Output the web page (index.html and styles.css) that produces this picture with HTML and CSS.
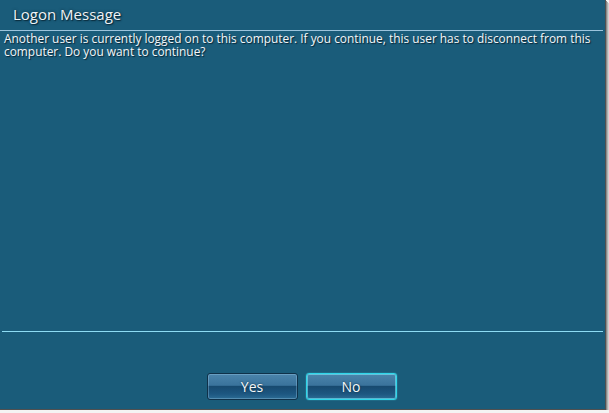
FILE: index.html
```html
<!DOCTYPE html>
<html lang="en">
<head>
  <meta charset="UTF-8">
  <title>Logon Message</title>
  <link rel="stylesheet" href="styles.css">
</head>
<body>
<div class="dialog">
  <div class="title">Logon Message</div>
  <div class="message">
    Another user is currently logged on to this computer. If you continue, this user has to disconnect from this
    computer. Do you want to continue?
  </div>
  <div class="bottom">
    <div class="buttons">
      <button class="btn">Yes</button>
      <button class="btn focus">No</button>
    </div>
  </div>
</div>
</body>
</html>
```

FILE: styles.css
```css
* {
  margin: 0;
  padding: 0;
  box-sizing: border-box;
}

body {
  background: #f4f4f4;
  font-family: "Open Sans", "Noto Sans", "Liberation Sans", sans-serif;
}

.dialog {
  width: 606px;
  height: 410px;
  background: #1a5c7a;
  border-right: 1px solid #505050;
  border-bottom: 1px solid #505050;
  box-shadow: 1px 1px 0 #8a8a8a, 2px 2px 0 #b0b0b0, 3px 3px 0 #d0d0d0;
  display: flex;
  flex-direction: column;
}

.title {
  height: 31px;
  width: 603px;
  padding: 4px 0 0 13px;
  font-size: 15px;
  color: #eef3f6;
  text-shadow: 0 0 3px #0b2c3d, 1px 1px 1px #0b2c3d;
  border-bottom: 1px solid #9cc4dc;
}

.message {
  padding: 1px 0 0 4px;
  font-size: 11.9px;
  line-height: 13px;
  color: #f2f6f8;
  text-shadow: 1px 1px 1px #0a2535;
  width: 605px;
}

.bottom {
  margin-top: auto;
  width: 601px;
  height: 78px;
  margin-left: 2px;
  border-top: 1px solid #8edcf4;
  display: flex;
  justify-content: center;
  align-items: flex-end;
  padding-bottom: 9px;
}

.buttons {
  display: flex;
  gap: 8px;
  margin-left: -2px;
}

.btn {
  width: 91px;
  height: 27px;
  border: 1px solid #0f3149;
  border-radius: 3px;
  background: linear-gradient(#4b84ab 0%, #3a739c 45%, #174a70 50%, #1d5781 80%, #2c6c95 100%);
  box-shadow: inset 0 0 0 1px rgba(160, 205, 235, 0.35);
  color: #f4f8fa;
  font-family: "Open Sans", "Noto Sans", "Liberation Sans", sans-serif;
  font-size: 14px;
  text-shadow: 0 0 2px #0b2c3d;
}

.btn.focus {
  border-color: #2fd6ea;
  box-shadow: inset 0 0 0 1px rgba(120, 235, 250, 0.6), 0 0 1px #5ef0ff;
}
```
